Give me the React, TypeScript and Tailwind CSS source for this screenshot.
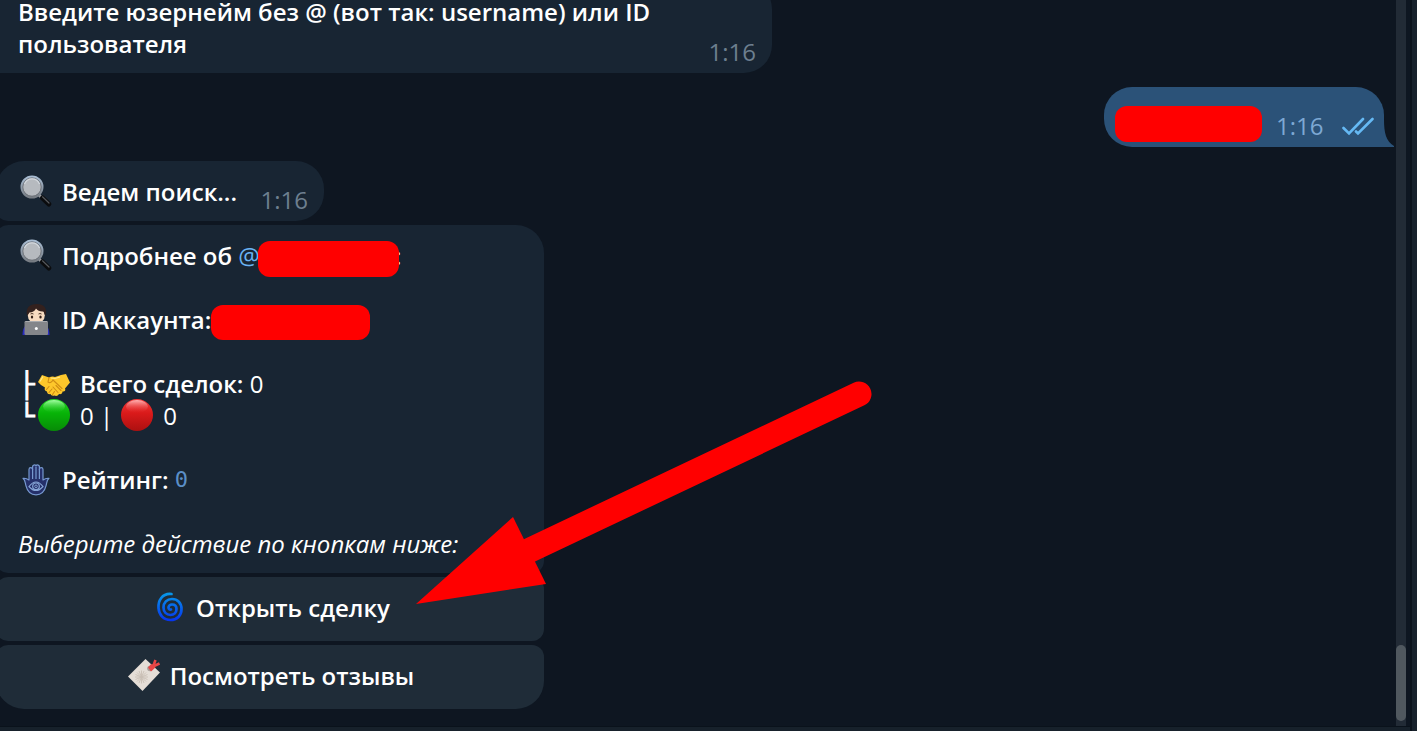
import type { ReactNode } from "react"

function Magnifier() {
  return (
    <svg viewBox="0 0 32 32" className="mb-0.5 size-8 shrink-0" aria-hidden="true">
      <defs>
        <linearGradient id="rim" x1="0" y1="0" x2="0" y2="1">
          <stop offset="0" stopColor="#a9bdd3" />
          <stop offset="1" stopColor="#777d84" />
        </linearGradient>
      </defs>
      <path d="M19 20l3 3" stroke="#9a9da1" strokeWidth="3" />
      <path d="M22.5 23l6.300 6" stroke="#0b0c0e" strokeWidth="5" strokeLinecap="round" />
      <path d="M22.5 21.800l6.500 6.200" stroke="#55585c" strokeWidth="1.200" strokeLinecap="round" />
      <circle cx="12" cy="12" r="10.400" fill="#b6babf" stroke="url(#rim)" strokeWidth="2.200" />
      <circle cx="12" cy="12" r="9.200" fill="none" stroke="#53575d" strokeWidth="0.700" />
      <path d="M4.500 9a8 8 0 0 1 15 0" fill="none" stroke="#d3d8de" strokeWidth="1.200" />
    </svg>
  )
}

function Technologist() {
  return (
    <svg viewBox="0 0 32 32" className="size-8 shrink-0" aria-hidden="true">
      <path d="M2.500 31c0-6 2-10 7-12h13c5 2 7 6 7 12z" fill="#2a2dbd" />
      <path d="M11 15h11v6H11z" fill="#e3b992" />
      <ellipse cx="16.300" cy="11.500" rx="8.500" ry="8" fill="#f7dbc0" />
      <path d="M7 12C5.500 4 9 0 17 0c8 0 10.500 5 8.500 12l-2-4.500c-3 .5-6-1-7.500-3-1 2.500-4 4-6.500 4z" fill="#33211e" />
      <path d="M10.500 10q1.500-1 3 0M18.500 10q1.500-1 3 0" fill="none" stroke="#503a2a" />
      <ellipse cx="12" cy="13" rx="1.200" ry="1.600" fill="#342018" />
      <ellipse cx="20.500" cy="13" rx="1.200" ry="1.600" fill="#342018" />
      <rect x="4.500" y="17" width="23.500" height="14" rx="1.200" fill="#84868a" />
      <path d="M5.500 17.500h21.500" stroke="#a9abae" />
      <circle cx="16.300" cy="24.500" r="1.500" fill="#fff" />
    </svg>
  )
}

function Handshake() {
  return (
    <svg viewBox="0 0 32 32" className="mt-0.5 size-8 shrink-0" aria-hidden="true">
      <path
        d="M0 13L4 6l7 2.500c2-1 4-1.500 6-.5L23 6l5-1 4 8.500-5 6c1 2-.5 3.500-2.500 3 0 2-1.500 3-3.500 2.500-1 2-3 2.500-4.500 1.500-2 .5-3.500 0-4-1.500-2 .5-3.500-.5-3.500-2.500-2-.5-3-2-2-4L3 16z"
        fill="#fdc72b"
      />
      <path
        d="M11 8.500l-1 4.500c2 1.500 4 0 5-2l9 8.500M18 16.500l5 5M15 18l5 5.500M8.500 20.500l2.500-3M11 23.500l3-3.500M14.500 25.500l2-3"
        fill="none"
        stroke="#d08d14"
        strokeWidth="1.100"
        strokeLinecap="round"
      />
      <path d="M5 7.500L2 12.500M13 9l4 .5 5-1.500" stroke="#ffe98b" fill="none" strokeWidth="1.200" />
    </svg>
  )
}

function GreenBall() {
  return (
    <svg viewBox="0 0 32 32" className="mb-0.5 size-8 shrink-0" aria-hidden="true">
      <defs>
        <linearGradient id="green" x1="0" y1="0" x2="0" y2="1">
          <stop offset="0" stopColor="#27d427" />
          <stop offset="0.45" stopColor="#07b307" />
          <stop offset="1" stopColor="#078b07" />
        </linearGradient>
        <linearGradient id="greenShine" x1="0" y1="0" x2="0" y2="1">
          <stop offset="0" stopColor="#a5ffa5" />
          <stop offset="1" stopColor="#1fc51f" stopOpacity="0" />
        </linearGradient>
      </defs>
      <circle cx="16" cy="16" r="16" fill="url(#green)" />
      <ellipse cx="16" cy="7.500" rx="11" ry="6.500" fill="url(#greenShine)" />
    </svg>
  )
}

function RedBall() {
  return (
    <svg viewBox="0 0 32 32" className="mb-0.5 size-8 shrink-0" aria-hidden="true">
      <defs>
        <linearGradient id="red" x1="0" y1="0" x2="0" y2="1">
          <stop offset="0" stopColor="#f33b3b" />
          <stop offset="0.45" stopColor="#d91a1a" />
          <stop offset="1" stopColor="#ac1010" />
        </linearGradient>
        <linearGradient id="redShine" x1="0" y1="0" x2="0" y2="1">
          <stop offset="0" stopColor="#ffb5b5" />
          <stop offset="1" stopColor="#e62b2b" stopOpacity="0" />
        </linearGradient>
      </defs>
      <circle cx="16" cy="16" r="16" fill="url(#red)" />
      <ellipse cx="16" cy="7.500" rx="11" ry="6.500" fill="url(#redShine)" />
    </svg>
  )
}

function Hamsa() {
  return (
    <svg viewBox="0 0 32 32" className="size-8 shrink-0" aria-hidden="true">
      <path
        d="M9 16V5.500a1.800 1.800 0 0 1 3.600 0V3a1.800 1.800 0 0 1 3.400-1 1.800 1.800 0 0 1 3.400 1v2.500a1.800 1.800 0 0 1 3.600 0V16c2-1.500 3.500-2 6-1.700-2.500 2-2 4.500-3 7.500-1.500 6-4.500 9-10 9s-8.500-3-10-9c-1-3-.5-5.500-3-7.500 2.500-.3 4 .2 6 1.700z"
        fill="#25306a"
        stroke="#7698cf"
        strokeWidth="1.200"
        strokeLinejoin="round"
      />
      <path d="M12.600 5v10M16 3v12M19.400 5v10" stroke="#7698cf" strokeWidth="1.200" />
      <path d="M9 22.500q7-9 14 0-7 8-14 0z" fill="#25306a" stroke="#86a5d6" strokeWidth="1.200" />
      <circle cx="16" cy="22.300" r="3.300" fill="#25306a" stroke="#86a5d6" strokeWidth="1.200" />
      <circle cx="16" cy="22.300" r="1.300" fill="none" stroke="#86a5d6" strokeWidth="0.900" />
    </svg>
  )
}

function Cyclone() {
  return (
    <svg viewBox="0 0 32 32" className="mb-0.5 size-8 shrink-0" aria-hidden="true">
      <defs>
        <linearGradient id="cyclone" x1="0" y1="0" x2="0" y2="1">
          <stop offset="0" stopColor="#0796e8" />
          <stop offset="1" stopColor="#0636ef" />
        </linearGradient>
      </defs>
      <path
        d="M17.500 3C8 2 4 10 4.500 17c.5 7 5 12 12 12 6.500 0 11-4.500 11-11 0-6-4-10-9.500-10-5 0-8.500 3.500-8.500 8.500 0 4.500 3 7.500 7 7.500 3.500 0 6-2.500 6-6 0-3-2-4.500-4.500-4.500-2 0-3.500 1.500-3.500 3 0 1.500 1 2.300 2.500 2"
        fill="none"
        stroke="url(#cyclone)"
        strokeWidth="2.700"
        strokeLinecap="round"
      />
    </svg>
  )
}

function Bookmark() {
  return (
    <svg viewBox="0 0 32 32" className="mb-0.5 size-8 shrink-0" aria-hidden="true">
      <path d="M17.500 0L32 13.500 14.500 32 0 17.500z" fill="#e5ded7" />
      <path
        d="M13.500 11.500v13M7 18h13M9 13.500l9 9M18 13.500l-9 9M11 12l5 12M16 12l-5 12M7.500 15.500l12 5M19.500 15.500l-12 5"
        stroke="#c9bfb5"
        strokeWidth="0.900"
      />
      <circle cx="22" cy="9.500" r="2.800" fill="#a99f99" />
      <path d="M22 10l4-5 1.500-4M25 7.500l6.500-3" fill="none" stroke="#e94646" strokeWidth="2.600" />
      <path d="M20 8.500l3-3.500 4.500 3.500-4.500 4z" fill="#e94646" />
    </svg>
  )
}

function Time({ children, className }: { children: ReactNode; className: string }) {
  return <time className={`font-normal ${className}`}>{children}</time>
}

function Redacted({ className }: { className: string }) {
  return <span className={`shrink-0 rounded-xl bg-[#ff0000] ${className}`} />
}

function Branch({ children }: { children: string }) {
  return (
    <span className="w-5 pt-0.5 pl-px font-['Liberation_Mono',monospace] text-[26px] [-webkit-text-stroke:1px_white]">
      {children}
    </span>
  )
}

export default function App() {
  return (
    <div className="flex h-screen overflow-hidden bg-[#0e1621] font-['Open_Sans','Noto_Sans',sans-serif] text-2xl leading-8 font-semibold text-white">
      <div className="flex min-w-0 flex-1 flex-col">
        <div className="flex min-h-0 flex-1">
          {/* Messages */}
          <main className="flex min-w-0 flex-1 flex-col justify-end overflow-hidden pb-[17px]">
            <div className="-ml-1 flex w-[776px] shrink-0 items-end justify-between rounded-r-[28px] bg-[#182533] pt-[15px] pr-4 pb-[13px] pl-[22px]">
              <p className="w-[660px]">Введите юзернейм без @ (вот так: username) или ID пользователя</p>
              <Time className="-mb-2 text-[#6d7f8f]">1:16</Time>
            </div>

            <div className="mt-3.5 mr-3 flex shrink-0 justify-end">
              <div className="relative flex h-[60px] w-[280px] items-end rounded-[28px] rounded-br-none bg-[#2b5278] pr-2.5 pb-[5px] pl-[11px]">
                <Redacted className="h-9 w-[147px]" />
                <Time className="ml-3.5 text-[#7da8d3]">1:16</Time>
                <svg viewBox="0 0 32 20" className="mb-1.5 ml-auto h-5 w-8" fill="none" stroke="#65b9f4" strokeWidth="2.600" strokeLinecap="round" role="img" aria-label="Прочитано">
                  <path d="M1.500 12L7 17.500 21 3M14 15.500l2 2L30.500 3" />
                </svg>
                <svg viewBox="0 0 10 28" className="absolute bottom-0 left-full h-7 w-2.5" aria-hidden="true">
                  <path d="M0 0c0 14 2 22 10 27v1H0z" fill="#2b5278" />
                </svg>
              </div>
            </div>

            <div className="mt-3.5 -ml-1 flex w-[328px] shrink-0 items-end justify-between rounded-[28px] rounded-bl-xl bg-[#182533] pt-[15px] pr-4 pb-[13px] pl-6">
              <p className="flex h-8 items-center gap-2.5">
                <Magnifier />
                Ведем поиск...
              </p>
              <Time className="-mb-2 text-[#6d7f8f]">1:16</Time>
            </div>

            <div className="relative mt-1 -ml-1 flex w-[548px] shrink-0 flex-col gap-1">
              <div className="flex flex-col gap-8 rounded-xl rounded-tr-[28px] bg-[#182533] pt-[15px] pb-[13px] pl-[22px]">
                <p className="flex h-8 items-center pl-0.5">
                  <Magnifier />
                  <span className="ml-2.5">Подробнее об&nbsp;</span>
                  <a href="#user" className="font-normal text-[#6ab3f3]">@</a>
                  <Redacted className="z-10 mt-1.5 -mr-1 -ml-0.5 h-9 w-[141px]" />
                  <span>:</span>
                </p>
                <p className="flex h-8 items-center pl-0.5">
                  <Technologist />
                  <span className="ml-2.5">ID Аккаунта:</span>
                  <Redacted className="mt-1 h-[35px] w-[159px]" />
                </p>
                <div>
                  <p className="flex h-8 items-center">
                    <Branch>├</Branch>
                    <Handshake />
                    <span className="ml-2.5">Всего сделок: <span className="font-normal">0</span></span>
                  </p>
                  <p className="flex h-8 items-center">
                    <Branch>└</Branch>
                    <GreenBall />
                    <span className="mr-2 ml-2.5 font-medium">0 |</span>
                    <RedBall />
                    <span className="ml-2.5 font-medium">0</span>
                  </p>
                </div>
                <p className="flex h-8 items-center pl-0.5">
                  <Hamsa />
                  <span className="ml-2.5">Рейтинг:&nbsp;</span>
                  <code className="font-['DejaVu_Sans_Mono',monospace] text-[22px] font-normal text-[#5b8fc7]">0</code>
                </p>
                <p className="font-normal italic">Выберите действие по кнопкам ниже:</p>
              </div>

              {/* Inline keyboard */}
              <button type="button" className="flex h-16 items-center justify-center gap-2.5 rounded-xl bg-[#1f2c38] pb-0.5 pl-1">
                <Cyclone />
                Открыть сделку
              </button>
              <button type="button" className="flex h-16 items-center justify-center gap-2.5 rounded-xl rounded-b-[28px] bg-[#1f2c38] pr-px pb-0.5 pl-[3px]">
                <Bookmark />
                Посмотреть отзывы
              </button>

              {/* Arrow pointing at the first button */}
              <svg viewBox="0 0 458 226" className="pointer-events-none absolute bottom-[104px] left-[420px] z-20 h-[226px] w-[458px]" aria-hidden="true">
                <path d="M443 15L110 173" stroke="#ff0000" strokeWidth="25" strokeLinecap="round" />
                <path d="M0 225L97 138 130 205z" fill="#ff0000" />
              </svg>
            </div>
          </main>

          {/* Scrollbar */}
          <div className="mr-1 flex w-2.5 flex-col justify-end bg-[#222b36] pb-[5px]">
            <div className="h-[76px] rounded-full bg-[#50585f]" />
          </div>
        </div>
        <footer className="h-[5px] shrink-0 border-t border-[#0a121b] bg-[#17212b]" />
      </div>
      <aside className="w-[7px] shrink-0 border-l-2 border-[#0a121b] bg-[#17212b]" />
    </div>
  )
}
